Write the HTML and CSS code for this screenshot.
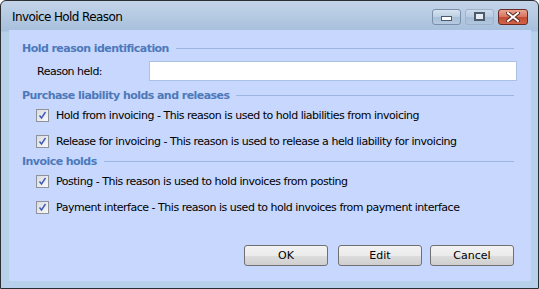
FILE: index.html
```html
<!DOCTYPE html>
<html lang="en">
<head>
  <meta charset="UTF-8">
  <meta name="viewport" content="width=device-width, initial-scale=1.0">
  <title>Invoice Hold Reason</title>
  <link rel="stylesheet" href="styles.css">
</head>
<body>
  <div class="window">
    <div class="titlebar">
      <span class="title">Invoice Hold Reason</span>
      <div class="controls">
        <span class="ctl ctl-min"><span class="min-bar"></span></span>
        <span class="ctl ctl-max"><span class="max-box"></span></span>
        <span class="ctl ctl-close">
          <svg width="14" height="10" viewBox="0 0 14 10">
            <path d="M2 1 L12 9 M12 1 L2 9" stroke="#5a2a22" stroke-width="4" stroke-linecap="square"/>
            <path d="M2 1 L12 9 M12 1 L2 9" stroke="#ffffff" stroke-width="2" stroke-linecap="square"/>
          </svg>
        </span>
      </div>
    </div>

    <div class="client">
      <div class="group-head">
        <span>Hold reason identification</span>
        <span class="rule"></span>
      </div>
      <div class="field-row">
        <label for="reason">Reason held:</label>
        <input type="text" id="reason" class="text-input">
      </div>

      <div class="group-head">
        <span>Purchase liability holds and releases</span>
        <span class="rule"></span>
      </div>
      <div class="check-row">
        <span class="check"><svg width="9" height="9" viewBox="0 0 9 9"><path d="M1.5 4.5 L3.5 7 L7.5 1" fill="none" stroke="#4059b0" stroke-width="1.4"/></svg></span>
        <span>Hold from invoicing - This reason is used to hold liabilities from invoicing</span>
      </div>
      <div class="check-row">
        <span class="check"><svg width="9" height="9" viewBox="0 0 9 9"><path d="M1.5 4.5 L3.5 7 L7.5 1" fill="none" stroke="#4059b0" stroke-width="1.4"/></svg></span>
        <span>Release for invoicing - This reason is used to release a held liability for invoicing</span>
      </div>

      <div class="group-head">
        <span>Invoice holds</span>
        <span class="rule"></span>
      </div>
      <div class="check-row">
        <span class="check"><svg width="9" height="9" viewBox="0 0 9 9"><path d="M1.5 4.5 L3.5 7 L7.5 1" fill="none" stroke="#4059b0" stroke-width="1.4"/></svg></span>
        <span>Posting - This reason is used to hold invoices from posting</span>
      </div>
      <div class="check-row">
        <span class="check"><svg width="9" height="9" viewBox="0 0 9 9"><path d="M1.5 4.5 L3.5 7 L7.5 1" fill="none" stroke="#4059b0" stroke-width="1.4"/></svg></span>
        <span>Payment interface - This reason is used to hold invoices from payment interface</span>
      </div>

      <div class="buttons">
        <button type="button">OK</button>
        <button type="button" class="btn-edit">Edit</button>
        <button type="button">Cancel</button>
      </div>
    </div>
  </div>
</body>
</html>
```

FILE: styles.css
```css
body {
  margin: 0;
  padding: 0;
  background-color: #ffffff;
  font-family: "DejaVu Sans", Verdana, sans-serif;
  font-size: 11px;
}

.window {
  width: 537px;
  height: 287px;
  border: 1px solid #2b2f33;
  border-radius: 6px 6px 0 0;
  background: linear-gradient(#c3d4e9, #a7c0dc 30px, #b7d1ea 31px, #b7d1ea);
  display: flex;
  flex-direction: column;
  overflow: hidden;
}

.titlebar {
  height: 29px;
  display: flex;
  align-items: center;
  justify-content: space-between;
  padding: 0 10px 0 11px;
}

.title {
  font-family: "DejaVu Sans", sans-serif;
  font-size: 12px;
  color: #000000;
  letter-spacing: -0.6px;
  padding-top: 3px;
}

.controls {
  display: flex;
  gap: 4px;
  padding-top: 2px;
}

.ctl {
  width: 27px;
  height: 14px;
  border: 1px solid #7b8fa8;
  border-radius: 3px;
  display: flex;
  align-items: center;
  justify-content: center;
  background: linear-gradient(#d7e3f0, #bccfe3 50%, #a8bfd9 51%, #b6cbe1);
}

.ctl-max {
  border-color: #9fb3cb;
  background: linear-gradient(#cddbeb, #b8cbe0 50%, #a6bdd7 51%, #b1c7de);
}

.ctl-close {
  width: 28px;
  border-color: #6b2a22;
  background: linear-gradient(#e8a392, #d9725c 50%, #c24a32 51%, #d0644a);
}

.min-bar {
  width: 9px;
  height: 3px;
  margin-top: 3px;
  border: 1px solid #4d5a6b;
  background: #ffffff;
}

.max-box {
  width: 7px;
  height: 5px;
  border: 2px solid #4d5a6b;
  background: #e6edf5;
}

.client {
  flex: 1;
  margin: 0 7px 7px 8px;
  background-color: #c7d7fd;
  padding: 11px 14px 0 13px;
  display: flex;
  flex-direction: column;
}

.group-head {
  display: flex;
  align-items: center;
  gap: 7px;
  height: 14px;
  font-weight: bold;
  color: #4d79bb;
  letter-spacing: -0.55px;
  margin-right: 3px;
}

.rule {
  flex: 1;
  height: 1px;
  background-color: #9bb6e2;
  margin-top: 1px;
}

.field-row {
  display: flex;
  align-items: center;
  height: 22px;
  margin: 5px 0 6px 15px;
}

.field-row label {
  width: 112px;
  color: #000000;
  letter-spacing: -0.5px;
}

.text-input {
  flex: 1;
  height: 20px;
  box-sizing: border-box;
  border: 1px solid #a9c2e4;
  background: #ffffff;
}

.check-row {
  display: flex;
  align-items: center;
  height: 26px;
  padding-left: 14px;
  color: #000000;
  letter-spacing: -0.48px;
}

.check {
  width: 11px;
  height: 11px;
  border: 1px solid #8f9297;
  background: linear-gradient(135deg, #d9dce2, #f7f8fa);
  display: flex;
  align-items: center;
  justify-content: center;
  margin-right: 7px;
}

.buttons {
  display: flex;
  justify-content: flex-end;
  gap: 10px;
  margin-top: auto;
  margin-bottom: 15px;
  margin-right: 3px;
}

.buttons button {
  width: 84px;
  height: 21px;
  border: 1px solid #707070;
  border-radius: 3px;
  background: linear-gradient(#f2f2f2, #ebebeb 50%, #dddddd 51%, #cfcfcf);
  font-family: "DejaVu Sans", sans-serif;
  font-size: 11px;
  color: #000000;
  padding: 0;
}

.btn-edit {
  margin-right: -2px;
}
```
